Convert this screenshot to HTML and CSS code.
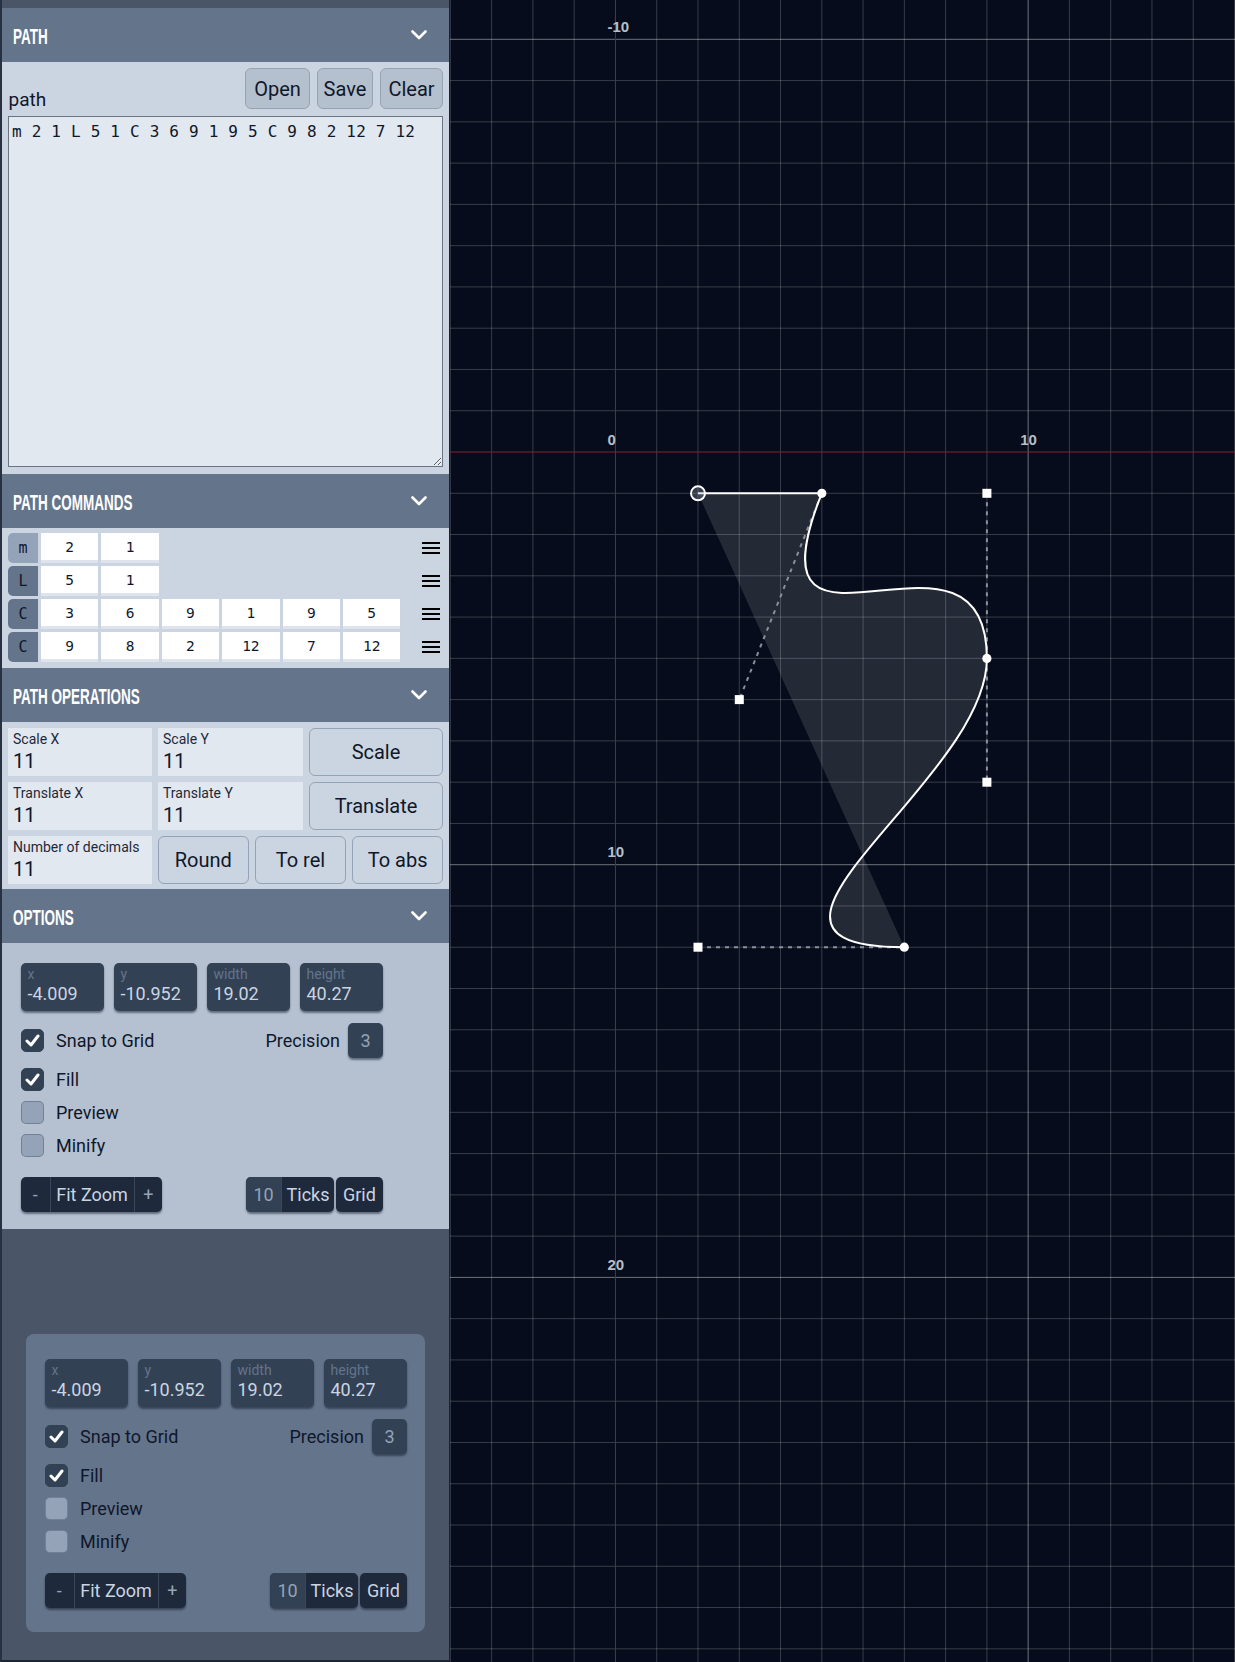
FILE: index.html
```html
<!DOCTYPE html>
<html lang="en">
<head>
<meta charset="utf-8">
<title>Path editor</title>
<link rel="stylesheet" href="styles.css">
</head>
<body>
<div class="app">
  <aside class="sidebar">
    <section class="section">
      <header class="sec-head">
        <span class="sec-title">PATH</span>
        <svg class="chev" width="16" height="10" viewBox="0 0 16 10"><polyline points="1.5,1.5 8,8 14.5,1.5"/></svg>
      </header>
      <div class="path-body">
        <div class="path-top">
          <span class="path-label">path</span>
          <div class="file-btns">
            <button class="file-btn file-btn-open">Open</button>
            <button class="file-btn file-btn-save">Save</button>
            <button class="file-btn file-btn-clear">Clear</button>
          </div>
        </div>
        <textarea class="path-input" spellcheck="false">m 2 1 L 5 1 C 3 6 9 1 9 5 C 9 8 2 12 7 12</textarea>
      </div>
    </section>

    <section class="section">
      <header class="sec-head">
        <span class="sec-title">PATH COMMANDS</span>
        <svg class="chev" width="16" height="10" viewBox="0 0 16 10"><polyline points="1.5,1.5 8,8 14.5,1.5"/></svg>
      </header>
      <div class="cmd-body">
        <div class="cmd-row">
          <span class="cmd-letter cmd-letter-active">m</span>
          <span class="cmd-val">2</span><span class="cmd-val">1</span>
          <svg class="drag" width="18" height="12" viewBox="0 0 18 12"><rect y="0" width="18" height="2"/><rect y="5" width="18" height="2"/><rect y="10" width="18" height="2"/></svg>
        </div>
        <div class="cmd-row">
          <span class="cmd-letter">L</span>
          <span class="cmd-val">5</span><span class="cmd-val">1</span>
          <svg class="drag" width="18" height="12" viewBox="0 0 18 12"><rect y="0" width="18" height="2"/><rect y="5" width="18" height="2"/><rect y="10" width="18" height="2"/></svg>
        </div>
        <div class="cmd-row">
          <span class="cmd-letter">C</span>
          <span class="cmd-val">3</span><span class="cmd-val">6</span><span class="cmd-val">9</span><span class="cmd-val">1</span><span class="cmd-val">9</span><span class="cmd-val">5</span>
          <svg class="drag" width="18" height="12" viewBox="0 0 18 12"><rect y="0" width="18" height="2"/><rect y="5" width="18" height="2"/><rect y="10" width="18" height="2"/></svg>
        </div>
        <div class="cmd-row">
          <span class="cmd-letter">C</span>
          <span class="cmd-val">9</span><span class="cmd-val">8</span><span class="cmd-val">2</span><span class="cmd-val">12</span><span class="cmd-val">7</span><span class="cmd-val">12</span>
          <svg class="drag" width="18" height="12" viewBox="0 0 18 12"><rect y="0" width="18" height="2"/><rect y="5" width="18" height="2"/><rect y="10" width="18" height="2"/></svg>
        </div>
      </div>
    </section>

    <section class="section">
      <header class="sec-head">
        <span class="sec-title">PATH OPERATIONS</span>
        <svg class="chev" width="16" height="10" viewBox="0 0 16 10"><polyline points="1.5,1.5 8,8 14.5,1.5"/></svg>
      </header>
      <div class="ops-body">
        <div class="field"><span class="field-label">Scale X</span><span class="field-value">11</span></div>
        <div class="field"><span class="field-label">Scale Y</span><span class="field-value">11</span></div>
        <button class="op-btn">Scale</button>
        <div class="field"><span class="field-label">Translate X</span><span class="field-value">11</span></div>
        <div class="field"><span class="field-label">Translate Y</span><span class="field-value">11</span></div>
        <button class="op-btn">Translate</button>
        <div class="field"><span class="field-label">Number of decimals</span><span class="field-value">11</span></div>
        <div class="op-trio">
          <button class="op-btn">Round</button>
          <button class="op-btn">To rel</button>
          <button class="op-btn">To abs</button>
        </div>
      </div>
    </section>

    <section class="section">
      <header class="sec-head">
        <span class="sec-title">OPTIONS</span>
        <svg class="chev" width="16" height="10" viewBox="0 0 16 10"><polyline points="1.5,1.5 8,8 14.5,1.5"/></svg>
      </header>
      <div class="opts-body">
        <div class="opts">
          <div class="bbox-row">
            <div class="bbox"><span class="bbox-label">x</span><span class="bbox-value">-4.009</span></div>
            <div class="bbox"><span class="bbox-label">y</span><span class="bbox-value">-10.952</span></div>
            <div class="bbox"><span class="bbox-label">width</span><span class="bbox-value">19.02</span></div>
            <div class="bbox"><span class="bbox-label">height</span><span class="bbox-value">40.27</span></div>
          </div>
          <div class="opt-row opt-row-snap">
            <span class="check check-on"><svg width="15" height="13" viewBox="0 0 15 13"><polyline points="2,7 6,11 13,2"/></svg></span>
            <span class="opt-text">Snap to Grid</span>
            <span class="prec-label">Precision</span>
            <span class="prec-box">3</span>
          </div>
          <div class="opt-row">
            <span class="check check-on"><svg width="15" height="13" viewBox="0 0 15 13"><polyline points="2,7 6,11 13,2"/></svg></span>
            <span class="opt-text">Fill</span>
          </div>
          <div class="opt-row"><span class="check"></span><span class="opt-text">Preview</span></div>
          <div class="opt-row"><span class="check"></span><span class="opt-text">Minify</span></div>
          <div class="ctrl-row">
            <div class="seg-group"><span class="seg seg-pm">-</span><span class="seg seg-fit">Fit Zoom</span><span class="seg seg-pm">+</span></div>
            <div class="ticks">
              <div class="seg-group"><span class="seg seg-num">10</span><span class="seg seg-ticks">Ticks</span></div>
              <div class="seg-group"><span class="seg seg-grid">Grid</span></div>
            </div>
          </div>
        </div>
      </div>
    </section>

    <div class="float-panel">
      <div class="opts">
        <div class="bbox-row">
          <div class="bbox"><span class="bbox-label">x</span><span class="bbox-value">-4.009</span></div>
          <div class="bbox"><span class="bbox-label">y</span><span class="bbox-value">-10.952</span></div>
          <div class="bbox"><span class="bbox-label">width</span><span class="bbox-value">19.02</span></div>
          <div class="bbox"><span class="bbox-label">height</span><span class="bbox-value">40.27</span></div>
        </div>
        <div class="opt-row opt-row-snap">
          <span class="check check-on"><svg width="15" height="13" viewBox="0 0 15 13"><polyline points="2,7 6,11 13,2"/></svg></span>
          <span class="opt-text">Snap to Grid</span>
          <span class="prec-label">Precision</span>
          <span class="prec-box">3</span>
        </div>
        <div class="opt-row">
          <span class="check check-on"><svg width="15" height="13" viewBox="0 0 15 13"><polyline points="2,7 6,11 13,2"/></svg></span>
          <span class="opt-text">Fill</span>
        </div>
        <div class="opt-row"><span class="check"></span><span class="opt-text">Preview</span></div>
        <div class="opt-row"><span class="check"></span><span class="opt-text">Minify</span></div>
        <div class="ctrl-row">
          <div class="seg-group"><span class="seg seg-pm">-</span><span class="seg seg-fit">Fit Zoom</span><span class="seg seg-pm">+</span></div>
          <div class="ticks">
            <div class="seg-group"><span class="seg seg-num">10</span><span class="seg seg-ticks">Ticks</span></div>
            <div class="seg-group"><span class="seg seg-grid">Grid</span></div>
          </div>
        </div>
      </div>
    </div>
  </aside>

  <main class="canvas">
    <svg class="canvas-svg" width="785" height="1662" viewBox="0 0 785 1662">
      <g transform="translate(165.45 452) scale(41.27)">
        <path class="grid-minor" d="M-4-11V30M-3-11V30M-2-11V30M-1-11V30M1-11V30M2-11V30M3-11V30M4-11V30M5-11V30M6-11V30M7-11V30M8-11V30M9-11V30M11-11V30M12-11V30M13-11V30M14-11V30M15-11V30M-5-9H16M-5-8H16M-5-7H16M-5-6H16M-5-5H16M-5-4H16M-5-3H16M-5-2H16M-5-1H16M-5 1H16M-5 2H16M-5 3H16M-5 4H16M-5 5H16M-5 6H16M-5 7H16M-5 8H16M-5 9H16M-5 11H16M-5 12H16M-5 13H16M-5 14H16M-5 15H16M-5 16H16M-5 17H16M-5 18H16M-5 19H16M-5 21H16M-5 22H16M-5 23H16M-5 24H16M-5 25H16M-5 26H16M-5 27H16M-5 28H16M-5 29H16"/>
        <path class="grid-major" d="M10-11V30M-5-10H16M-5 10H16M-5 20H16"/>
        <path class="grid-axis" d="M0-11V30M-5 0H16"/>
      </g>
      <text class="axis-label" x="157.5" y="32">-10</text>
      <text class="axis-label" x="157.5" y="444.5">0</text>
      <text class="axis-label" x="570.2" y="444.5">10</text>
      <text class="axis-label" x="157.5" y="857">10</text>
      <text class="axis-label" x="157.5" y="1270">20</text>

      <path class="shape-fill" d="M248 493.3 L371.8 493.3 C289.3 699.6 536.9 493.3 536.9 658.4 C536.9 782.2 248 947.2 454.3 947.2 Z"/>
      <path class="handle" d="M371.8 493.3 L289.3 699.6 M536.9 493.3 L536.9 658.4 M536.9 658.4 L536.9 782.2 M248 947.2 L454.3 947.2"/>
      <path class="shape-stroke" d="M248 493.3 L371.8 493.3 C289.3 699.6 536.9 493.3 536.9 658.4 C536.9 782.2 248 947.2 454.3 947.2"/>

      <rect class="ctrl-pt" x="284.8" y="695.1" width="9" height="9"/>
      <rect class="ctrl-pt" x="532.4" y="488.8" width="9" height="9"/>
      <rect class="ctrl-pt" x="532.4" y="777.7" width="9" height="9"/>
      <rect class="ctrl-pt" x="243.5" y="942.7" width="9" height="9"/>

      <circle class="end-pt" cx="371.8" cy="493.3" r="4.6"/>
      <circle class="end-pt" cx="536.9" cy="658.4" r="4.6"/>
      <circle class="end-pt" cx="454.3" cy="947.2" r="4.6"/>
      <circle class="start-pt" cx="248" cy="493.3" r="7"/>
    </svg>
  </main>
</div>
</body>
</html>
```

FILE: styles.css
```css
* { box-sizing: border-box; }

html, body {
  margin: 0;
  padding: 0;
  background: #060c1b;
}

body {
  font-family: Roboto, "Noto Sans", Arial, sans-serif;
  color: #0f172a;
  overflow: hidden;
}

.app {
  display: flex;
  width: 1235px;
  height: 1662px;
}

/* ---------- sidebar ---------- */
.sidebar {
  flex: none;
  width: 449px;
  height: 1662px;
  background: #4a5568;
  border-left: 2px solid #283142;
  border-bottom: 2px solid #1d2432;
  padding-top: 8px;
  display: flex;
  flex-direction: column;
}

.sec-head {
  height: 54px;
  background: #64748b;
  display: flex;
  align-items: center;
  justify-content: space-between;
  padding: 0 22px 0 11px;
}

.sec-title {
  display: inline-block;
  font-family: "Liberation Sans", Arial, sans-serif;
  font-weight: 700;
  font-size: 22.5px;
  line-height: 22px;
  color: #ffffff;
  white-space: nowrap;
  transform: scaleX(0.6);
  transform-origin: 0 50%;
  margin-top: 3.4px;
}

.chev {
  display: block;
  fill: none;
  stroke: #ffffff;
  stroke-width: 2.6;
  stroke-linecap: round;
  stroke-linejoin: round;
}

/* PATH */
.path-body {
  background: #cbd5e1;
  height: 412px;
  padding: 6px 6px 7px 6px;
  display: flex;
  flex-direction: column;
}

.path-top {
  display: flex;
  align-items: flex-end;
  justify-content: space-between;
  height: 41px;
}

.path-label {
  font-size: 19px;
  line-height: 19px;
  padding-left: 0.5px;
  color: #0f172a;
}

.file-btns {
  display: flex;
  gap: 7px;
  height: 41px;
}

.file-btn {
  font-family: inherit;
  font-size: 20px;
  color: #0f172a;
  background: #b5c0ce;
  border: 1px solid #97a3b5;
  border-radius: 6px;
  padding: 0;
  height: 41px;
}

.file-btn-open { width: 65px; }
.file-btn-save { width: 56px; }
.file-btn-clear { width: 63px; }

.path-input {
  display: block;
  margin: 7px 0 0 0;
  width: 100%;
  height: 351px;
  font-family: "DejaVu Sans Mono", "Liberation Mono", monospace;
  font-size: 16px;
  letter-spacing: 0.2px;
  line-height: 19px;
  color: #0f172a;
  background: #e2e8f0;
  border: 1px solid #6b7483;
  border-radius: 0;
  padding: 5px 3px;
  outline: none;
}

/* PATH COMMANDS */
.cmd-body {
  background: #cbd5e1;
  height: 140px;
  padding: 5px 9px 0 6px;
  display: flex;
  flex-direction: column;
  gap: 3px;
}

.cmd-row {
  display: flex;
  align-items: center;
  gap: 3px;
  height: 30px;
}

.cmd-letter {
  flex: none;
  width: 30px;
  height: 30px;
  background: #64748b;
  border-radius: 5px 0 0 5px;
  display: flex;
  align-items: center;
  justify-content: center;
  font-family: "DejaVu Sans Mono", monospace;
  font-size: 15px;
  color: #0f172a;
}

.cmd-letter-active {
  background: #94a3b8;
}

.cmd-val {
  flex: none;
  width: 57.4px;
  height: 30px;
  background: #ffffff;
  border-bottom: 3px solid #dfe4ec;
  padding-top: 1px;
  display: flex;
  align-items: center;
  justify-content: center;
  font-family: "DejaVu Sans Mono", monospace;
  font-size: 14.5px;
  color: #0f172a;
}

.drag {
  display: block;
  margin-left: auto;
  fill: #000000;
}

/* PATH OPERATIONS */
.ops-body {
  background: #cbd5e1;
  height: 167px;
  padding: 6px;
  display: grid;
  grid-template-columns: 144px 145px 1fr;
  grid-auto-rows: 48px;
  gap: 6px;
}

.field {
  background: #e2e8f0;
  padding: 3px 5px 0;
  display: flex;
  flex-direction: column;
}

.field-label {
  font-size: 14px;
  line-height: 16px;
  color: #1e293b;
}

.field-value {
  font-size: 20px;
  line-height: 24px;
  margin-top: 2px;
  color: #0f172a;
}

.op-btn {
  font-family: inherit;
  font-size: 20px;
  color: #0f172a;
  background: #cbd5e1;
  border: 1px solid #94a3b8;
  border-radius: 6px;
  padding: 0;
}

.op-trio {
  grid-column: span 2;
  display: grid;
  grid-template-columns: repeat(3, 1fr);
  gap: 6.5px;
}

/* OPTIONS */
.opts-body {
  background: #b5c1d0;
  height: 286px;
  padding: 20px 0 0 19px;
}

.opts {
  width: 362px;
}

.bbox-row {
  display: flex;
  gap: 10px;
}

.bbox {
  width: 83px;
  height: 48px;
  background: #334155;
  border-radius: 5px;
  box-shadow: 0 2px 2px rgba(15, 23, 42, 0.5);
  padding: 3px 0 0 6.5px;
  display: flex;
  flex-direction: column;
}

.bbox-label {
  font-size: 14px;
  line-height: 16px;
  color: #64748b;
}

.bbox-value {
  font-size: 18px;
  line-height: 22px;
  margin-top: 1px;
  color: #cbd5e1;
}

.opt-row {
  display: flex;
  align-items: center;
  height: 23px;
  margin-top: 10px;
}

.opt-row-snap {
  height: 35px;
  margin-top: 12px;
}

.check {
  flex: none;
  width: 23px;
  height: 23px;
  border-radius: 5px;
  background: #94a3b8;
  border: 1px solid rgba(51, 65, 85, 0.35);
  display: flex;
  align-items: center;
  justify-content: center;
}

.check svg {
  display: block;
  fill: none;
  stroke: #ffffff;
  stroke-width: 3;
  stroke-linecap: round;
  stroke-linejoin: round;
}

.check-on {
  background: #334155;
  border-color: #334155;
}

.opt-text {
  margin-left: 12px;
  font-size: 18px;
  color: #0f172a;
}

.prec-label {
  margin-left: auto;
  margin-right: 8px;
  font-size: 18px;
  color: #0f172a;
}

.prec-box {
  width: 35px;
  height: 35px;
  background: #334155;
  border-radius: 5px;
  box-shadow: 0 2px 2px rgba(15, 23, 42, 0.5);
  display: flex;
  align-items: center;
  justify-content: center;
  font-size: 18px;
  color: #94a3b8;
}

.ctrl-row {
  display: flex;
  justify-content: space-between;
  margin-top: 19.5px;
  height: 35px;
}

.ticks {
  display: flex;
  gap: 1.7px;
}

.seg-group {
  display: flex;
  height: 35px;
  border-radius: 5px;
  overflow: hidden;
  background: #1e293b;
  box-shadow: 0 2px 2px rgba(15, 23, 42, 0.5);
}

.seg {
  display: flex;
  align-items: center;
  justify-content: center;
  font-size: 18px;
  color: #cbd5e1;
}

.seg + .seg {
  border-left: 1px solid #3a475a;
}

.seg-pm {
  width: 28.6px;
  color: #94a3b8;
}

.seg-fit {
  width: 84px;
}

.seg-num {
  width: 35px;
  background: #334155;
  color: #94a3b8;
}

.seg-ticks {
  width: 53px;
}

.seg-grid {
  width: 47.3px;
}

.float-panel {
  margin: 105px 24px 0 24px;
  background: #64748b;
  border-radius: 8px;
  padding: 25px 18px 24px 19px;
}

/* ---------- canvas ---------- */
.canvas {
  flex: 1;
  border-left: 1px solid #1b2130;
  background: #060c1b;
  overflow: hidden;
}

.canvas-svg {
  display: block;
}

.grid-minor {
  fill: none;
  stroke: rgba(255, 255, 255, 0.2);
  stroke-width: 1;
  vector-effect: non-scaling-stroke;
}

.grid-major {
  fill: none;
  stroke: rgba(255, 255, 255, 0.42);
  stroke-width: 1;
  vector-effect: non-scaling-stroke;
}

.grid-axis {
  fill: none;
  stroke: #8a1f30;
  stroke-width: 1;
  vector-effect: non-scaling-stroke;
}

.axis-label {
  font-family: "Liberation Sans", Arial, sans-serif;
  font-weight: 700;
  font-size: 15px;
  fill: #b6bec9;
}

.shape-fill {
  fill: rgba(255, 255, 255, 0.12);
  stroke: none;
}

.handle {
  fill: none;
  stroke: #8a8f99;
  stroke-width: 2;
  stroke-dasharray: 4 5;
}

.shape-stroke {
  fill: none;
  stroke: #ffffff;
  stroke-width: 2;
}

.ctrl-pt {
  fill: #ffffff;
}

.end-pt {
  fill: #ffffff;
}

.start-pt {
  fill: rgba(160, 170, 190, 0.3);
  stroke: #ffffff;
  stroke-width: 2;
}
```
